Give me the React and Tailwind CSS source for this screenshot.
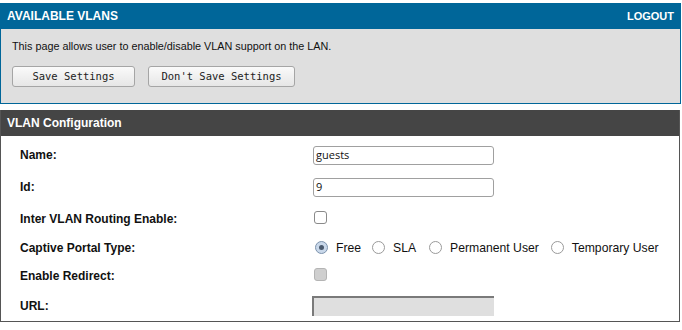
const Radio = ({ checked }) => (
  <span
    className={`inline-flex h-[13px] w-[13px] items-center justify-center rounded-full border ${
      checked ? "border-[#7d93ad] bg-[#c9d8ea]" : "border-[#9a9a9a] bg-white"
    }`}
  >
    {checked && <span className="h-[5px] w-[5px] rounded-full bg-[#4a5a6e]" />}
  </span>
)

const Checkbox = ({ disabled }) => (
  <span
    className={`inline-block h-[13px] w-[13px] rounded-[3px] border ${
      disabled ? "border-[#b4b4b4] bg-[#cfcfcf]" : "border-[#8a8a8a] bg-white"
    }`}
  />
)

const TextInput = ({ value }) => (
  <div className="flex h-[19px] w-[181px] items-center rounded-[3px] border border-[#a0a0a0] bg-white pl-[2px] font-['Open_Sans',sans-serif] text-[11px] text-[#111]">
    {value}
  </div>
)

const Row = ({ label, h, children }) => (
  <div className="flex items-center" style={{ height: h }}>
    <div className="w-[312px] pl-[19px] text-[12px] font-bold text-[#111]">{label}</div>
    <div className="flex items-center">{children}</div>
  </div>
)

export default function App() {
  const options = [
    { label: "Free", checked: true, gap: "mr-[11px]" },
    { label: "SLA", checked: false, gap: "mr-[13px]" },
    { label: "Permanent User", checked: false, gap: "mr-[12px]" },
    { label: "Temporary User", checked: false, gap: "" }
  ]

  return (
    <div className="min-h-[330px] w-[682px] bg-white pt-[3px] font-['Liberation_Sans',Arial,sans-serif]">
      {/* top panel */}
      <div className="w-[681px] border border-t-0 border-[#006699]">
        <div className="flex h-[26px] items-center justify-between bg-[#006699] pl-[6px] pr-[6px] text-white">
          <span className="text-[12px] font-bold">AVAILABLE VLANS</span>
          <span className="text-[11px] font-bold">LOGOUT</span>
        </div>
        <div className="h-[74px] bg-[#dfdfdf] pl-[11px] pt-[9px]">
          <div className="text-[10.8px] leading-[16px] text-[#111]">
            This page allows user to enable/disable VLAN support on the LAN.
          </div>
          <div className="mt-[12px] flex gap-[13px]">
            <button className="h-[21px] w-[123px] rounded-[3px] border border-[#a5a5a5] bg-gradient-to-b from-[#fafafa] to-[#e6e6e6] font-['DejaVu_Sans_Mono',monospace] text-[10.5px] text-[#222]">
              Save Settings
            </button>
            <button className="h-[21px] w-[147px] rounded-[3px] border border-[#a5a5a5] bg-gradient-to-b from-[#fafafa] to-[#e6e6e6] font-['DejaVu_Sans_Mono',monospace] text-[10.5px] text-[#222]">
              Don't Save Settings
            </button>
          </div>
        </div>
      </div>

      {/* VLAN configuration panel */}
      <div className="mt-[6px] w-[680px] border border-t-0 border-[#555]">
        <div className="flex h-[26px] items-center bg-[#454545] pl-[6px] text-[12px] font-bold text-white">
          VLAN Configuration
        </div>
        <div className="pt-[3px]">
          <Row label="Name:" h={32}>
            <TextInput value="guests" />
          </Row>
          <Row label="Id:" h={32}>
            <TextInput value="9" />
          </Row>
          <Row label="Inter VLAN Routing Enable:" h={31}>
            <span className="ml-[1px]">
              <Checkbox />
            </span>
          </Row>
          <Row label="Captive Portal Type:" h={28}>
            <div className="ml-[2px] flex items-center text-[12.2px] text-[#111]">
              {options.map((o) => (
                <label key={o.label} className={`flex items-center ${o.gap}`}>
                  <Radio checked={o.checked} />
                  <span className="ml-[8px]">{o.label}</span>
                </label>
              ))}
            </div>
          </Row>
          <Row label="Enable Redirect:" h={28}>
            <span className="ml-[1px]">
              <Checkbox disabled />
            </span>
          </Row>
          <Row label="URL:" h={31}>
            <div className="-ml-[1px] h-[20px] w-[182px] border-l-2 border-t-2 border-[#7a7a7a] bg-[#dfdfdf]" />
          </Row>
        </div>
      </div>
    </div>
  )
}
